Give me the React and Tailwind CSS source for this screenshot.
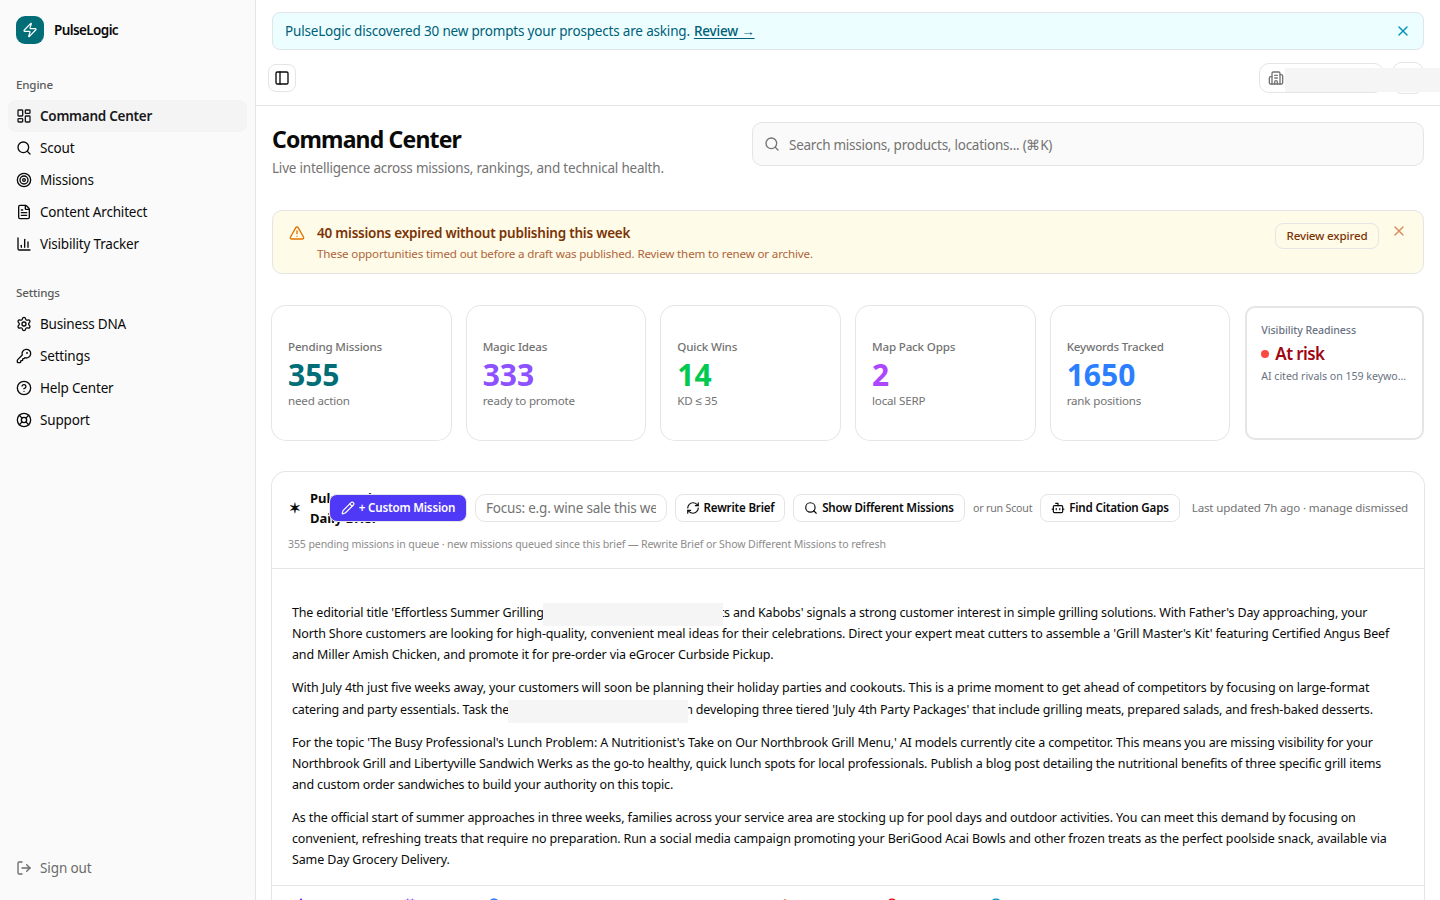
import React from 'react';
import {
  Zap, LayoutDashboard, Search, Target, FileText, ChartColumn, Settings, KeyRound,
  CircleQuestionMark, LifeBuoy, LogOut, PanelLeft, Building2, TriangleAlert, X, Pencil,
  RefreshCw, Bot, Sparkle, Calendar, Globe, ArrowUp, Triangle, MapPin, CircleCheck
} from 'lucide-react';

const engineLinks = [
  { label: 'Command Center', icon: LayoutDashboard, active: true },
  { label: 'Scout', icon: Search },
  { label: 'Missions', icon: Target },
  { label: 'Content Architect', icon: FileText },
  { label: 'Visibility Tracker', icon: ChartColumn },
];

const settingsLinks = [
  { label: 'Business DNA', icon: Settings },
  { label: 'Settings', icon: KeyRound },
  { label: 'Help Center', icon: CircleQuestionMark },
  { label: 'Support', icon: LifeBuoy },
];

const statCards = [
  { label: 'Pending Missions', value: '355', hint: 'need action', color: 'text-[#006d77]' },
  { label: 'Magic Ideas', value: '333', hint: 'ready to promote', color: 'text-[#8e51ff]' },
  { label: 'Quick Wins', value: '14', hint: 'KD ≤ 35', color: 'text-[#00c950]' },
  { label: 'Map Pack Opps', value: '2', hint: 'local SERP', color: 'text-[#ad46ff]' },
  { label: 'Keywords Tracked', value: '1650', hint: 'rank positions', color: 'text-[#2b7fff]' },
];

// null marks a redacted name inside a line
const paragraphs = [
  [
    ["The editorial title 'Effortless Summer Grilling", null, "ts and Kabobs' signals a strong customer interest in simple grilling solutions. With Father's Day approaching, your"],
    ["North Shore customers are looking for high-quality, convenient meal ideas for their celebrations. Direct your expert meat cutters to assemble a 'Grill Master's Kit' featuring Certified Angus Beef"],
    ['and Miller Amish Chicken, and promote it for pre-order via eGrocer Curbside Pickup.'],
  ],
  [
    ['With July 4th just five weeks away, your customers will soon be planning their holiday parties and cookouts. This is a prime moment to get ahead of competitors by focusing on large-format'],
    ['catering and party essentials. Task the', null, "n developing three tiered 'July 4th Party Packages' that include grilling meats, prepared salads, and fresh-baked desserts."],
  ],
  [
    ["For the topic 'The Busy Professional's Lunch Problem: A Nutritionist's Take on Our Northbrook Grill Menu,' AI models currently cite a competitor. This means you are missing visibility for your"],
    ['Northbrook Grill and Libertyville Sandwich Werks as the go-to healthy, quick lunch spots for local professionals. Publish a blog post detailing the nutritional benefits of three specific grill items'],
    ['and custom order sandwiches to build your authority on this topic.'],
  ],
  [
    ['As the official start of summer approaches in three weeks, families across your service area are stocking up for pool days and outdoor activities. You can meet this demand by focusing on'],
    ['convenient, refreshing treats that require no preparation. Run a social media campaign promoting your BeriGood Acai Bowls and other frozen treats as the perfect poolside snack, available via'],
    ['Same Day Grocery Delivery.'],
  ],
];

export default function App() {
  return (
    <div className="flex h-[900px] w-[1440px] overflow-hidden bg-white font-['Noto_Sans',sans-serif] text-[13.5px] leading-5 tracking-[-0.18px] text-[#0a0a0a]">
      <Sidebar />
      <div className="flex min-w-0 flex-1 flex-col">
        <div className="mx-4 mt-3 flex h-[38px] shrink-0 items-center rounded-lg border border-[#dfe6e8] bg-[#ecfeff] px-3 text-[#005f78]">
          <span>PulseLogic discovered 30 new prompts your prospects are asking.</span>
          <a href="#" className="ml-1 font-medium underline underline-offset-2">Review →</a>
          <X className="ml-auto size-4 text-[#0092b8]" />
        </div>
        <TopBar />
        <main className="flex flex-col px-4 pt-4">
          <div className="flex">
            <div className="w-[480px] shrink-0">
              <h1 className="mt-px text-[23px] leading-8 font-bold tracking-[-0.83px]">Command Center</h1>
              <p className="mt-[3px] tracking-[-0.21px] text-[#737373]">Live intelligence across missions, rankings, and technical health.</p>
            </div>
            <div className="flex h-11 flex-1 items-center gap-[9px] rounded-[10px] border border-[#e5e5e5] bg-[#fafafa] pt-px pl-[11px] tracking-[-0.25px] text-[#737373]">
              <Search className="-mt-0.5 size-4" />
              <span>Search missions, products, locations... (⌘K)</span>
            </div>
          </div>
          <ExpiredAlert />
          <div className="mt-8 grid h-[134px] grid-cols-6 gap-4">
            {statCards.map((card) => (
              <div key={card.label} className="flex flex-col rounded-[14px] px-4 pt-[33px] text-[11.6px] leading-4 text-[#737373] ring-1 ring-[#e6e6e6]">
                <span className="font-medium">{card.label}</span>
                <span className={`pt-px text-[30px] leading-[37px] font-bold tracking-normal ${card.color}`}>{card.value}</span>
                <span>{card.hint}</span>
              </div>
            ))}
            <div className="min-w-0 rounded-[10px] border-2 border-[#e5e5e5] px-3.5 pt-3.5 text-[10.6px] leading-4 text-[#6a7282]">
              <div className="font-medium tracking-[-0.08px]">Visibility Readiness</div>
              <div className="mt-0.5 flex h-7 items-center gap-1.5 text-[17px] font-semibold tracking-[-0.6px] text-[#9f0712]">
                <span className="size-2 rounded-full bg-[#fb4b41]" />
                At risk
              </div>
              <div className="truncate tracking-[-0.03px]">AI cited rivals on 159 keywords</div>
            </div>
          </div>
          <DailyBrief />
        </main>
      </div>
    </div>
  );
}

function Sidebar() {
  return (
    <aside className="flex w-64 shrink-0 flex-col border-r border-[#e5e5e5] bg-[#fafafa]">
      <div className="flex h-[60px] items-center gap-2.5 px-4">
        <div className="flex size-7 items-center justify-center rounded-[9px] bg-[#006d77] text-white">
          <Zap className="size-4" strokeWidth={1.8} />
        </div>
        <span className="font-semibold tracking-[-0.6px]">PulseLogic</span>
      </div>
      <div className="mt-2 flex flex-col gap-4">
        <NavGroup title="Engine" links={engineLinks} />
        <NavGroup title="Settings" links={settingsLinks} />
      </div>
      <div className="mt-auto mb-4 flex h-8 items-center gap-2 px-4 text-[#6b6b6b]">
        <LogOut className="size-4" />
        <span className="tracking-[-0.1px]">Sign out</span>
      </div>
    </aside>
  );
}

function NavGroup({ title, links }) {
  return (
    <nav className="px-2">
      <div className="flex h-8 items-center px-2 pt-0.5 text-[11.6px] font-medium text-[#5a5a5a]">{title}</div>
      {links.map((link) => (
        <a
          key={link.label}
          href="#"
          className={`flex h-8 items-center gap-2 rounded-lg px-2 ${link.active ? 'bg-[#f4f4f5] font-semibold tracking-[-0.26px] text-[#18181b]' : ''}`}
        >
          <link.icon className="size-4" />
          <span>{link.label}</span>
        </a>
      ))}
    </nav>
  );
}

function TopBar() {
  return (
    <header className="relative flex h-14 shrink-0 items-center border-b border-[#e5e5e5] px-3">
      <button className="flex size-7 items-center justify-center rounded-lg border border-[#e5e5e5]">
        <PanelLeft className="size-4" />
      </button>
      <div className="ml-auto flex items-center gap-2 pr-1">
        <div className="flex h-[30px] w-[125px] items-center rounded-[10px] border border-[#e5e5e5] pl-2">
          <Building2 className="size-4 text-[#737373]" />
        </div>
        <div className="size-8 rounded-[10px] border border-[#e5e5e5]" />
      </div>
      <div className="absolute top-[18px] right-0 h-6 w-[155px] bg-[#f5f5f5]" />
    </header>
  );
}

function ExpiredAlert() {
  return (
    <div className="mt-8 flex h-16 items-start rounded-[10px] border border-[#e5e5e5] bg-[#fefbe8] pt-3 pr-4 pl-4">
      <TriangleAlert className="mt-0.5 size-4 text-[#e17100]" />
      <div className="ml-3">
        <div className="font-semibold tracking-[-0.22px] text-[#7b3306]">40 missions expired without publishing this week</div>
        <div className="mt-[3px] text-[11.6px] leading-4 tracking-[-0.16px] text-[#b0643a]">
          These opportunities timed out before a draft was published. Review them to renew or archive.
        </div>
      </div>
      <button className="ml-auto h-[26px] w-[104px] rounded-lg border border-[#e5e5e5] text-[11.6px] font-medium text-[#7b3306]">
        Review expired
      </button>
      <X className="ml-3 size-4 text-[#d98a5c]" />
    </div>
  );
}

function ActionButton({ icon: Icon, className, children }) {
  return (
    <button className={`flex h-7 shrink-0 items-center justify-center gap-1 rounded-lg border border-[#e5e5e5] text-[11.6px] font-semibold tracking-[-0.2px] whitespace-nowrap ${className}`}>
      <Icon className="size-3.5" />
      {children}
    </button>
  );
}

function DailyBrief() {
  return (
    <section className="mt-8 h-[500px] rounded-[14px] ring-1 ring-[#e5e5e5]">
      <div className="h-[97px] border-b border-[#e5e5e5] px-4 pt-4">
        <div className="flex h-10 items-center">
          <div className="flex w-[41px] shrink-0 items-center gap-[9px] font-bold">
            <span className="w-[13px] shrink-0 pl-px text-center">✶</span>
            <span className="text-[13px] leading-5 tracking-[-0.05px] whitespace-nowrap">PulseLogic<br />Daily Brief</span>
          </div>
          <div className="relative flex flex-1 items-center gap-2">
            <ActionButton icon={Pencil} className="w-[138px] bg-[#4f39f6] text-white">+ Custom Mission</ActionButton>
            <input
              className="h-7 w-48 shrink-0 rounded-[10px] border border-[#e5e5e5] bg-white px-2.5 tracking-[-0.2px] placeholder:text-[#737373]"
              placeholder="Focus: e.g. wine sale this weekend"
            />
            <ActionButton icon={RefreshCw} className="w-[110px]">Rewrite Brief</ActionButton>
            <ActionButton icon={Search} className="w-[172px]">Show Different Missions</ActionButton>
            <span className="w-[59px] shrink-0 text-[10.6px] whitespace-nowrap text-[#737373]">or run Scout</span>
            <ActionButton icon={Bot} className="w-[140px]">Find Citation Gaps</ActionButton>
            <span className="ml-auto text-[11.6px] tracking-[-0.17px] whitespace-nowrap text-[#737373]">Last updated 7h ago · manage dismissed</span>
          </div>
        </div>
        <p className="mt-2 text-[10.6px] leading-4 tracking-[-0.13px] text-[#8c8c8c]">
          355 pending missions in queue · new missions queued since this brief — Rewrite Brief or Show Different Missions to refresh
        </p>
      </div>
      <div className="flex h-[317px] flex-col gap-3 border-b border-[#e5e5e5] px-5 pt-[33px] text-[12.5px] leading-[21.125px] tracking-[-0.14px]">
        {paragraphs.map((lines, i) => (
          <div key={i}>
            {lines.map((line, j) => (
              <div key={j} className={`h-[21.125px] whitespace-nowrap ${line.length > 1 ? 'tracking-[-0.17px]' : ''}`}>
                {line.map((part, k) => (part === null ? <Redacted key={k} /> : <span key={k}>{part}</span>))}
              </div>
            ))}
          </div>
        ))}
      </div>
      <BriefFilters />
    </section>
  );
}

function Redacted() {
  return <span className="relative top-px -my-2 -mr-[3px] -ml-px inline-block h-[23px] w-[180px] bg-[#f5f5f5] align-middle" />;
}

function BriefFilters() {
  return (
    <div className="flex px-[22px] pt-3">
      <Sparkle className="size-3.5 text-[#7f22fe]" />
      <Calendar className="ml-[95px] size-3.5 text-[#8e51ff]" />
      <Globe className="ml-[70px] size-3.5 text-[#2b7fff]" />
      <ArrowUp className="ml-[196px] size-3.5 text-[#00a63e]" />
      <Triangle className="ml-[67px] size-3.5 text-[#f54900]" />
      <MapPin className="ml-[93px] size-3.5 text-[#e7000b]" />
      <CircleCheck className="ml-[90px] size-3.5 text-[#0092b8]" />
    </div>
  );
}
